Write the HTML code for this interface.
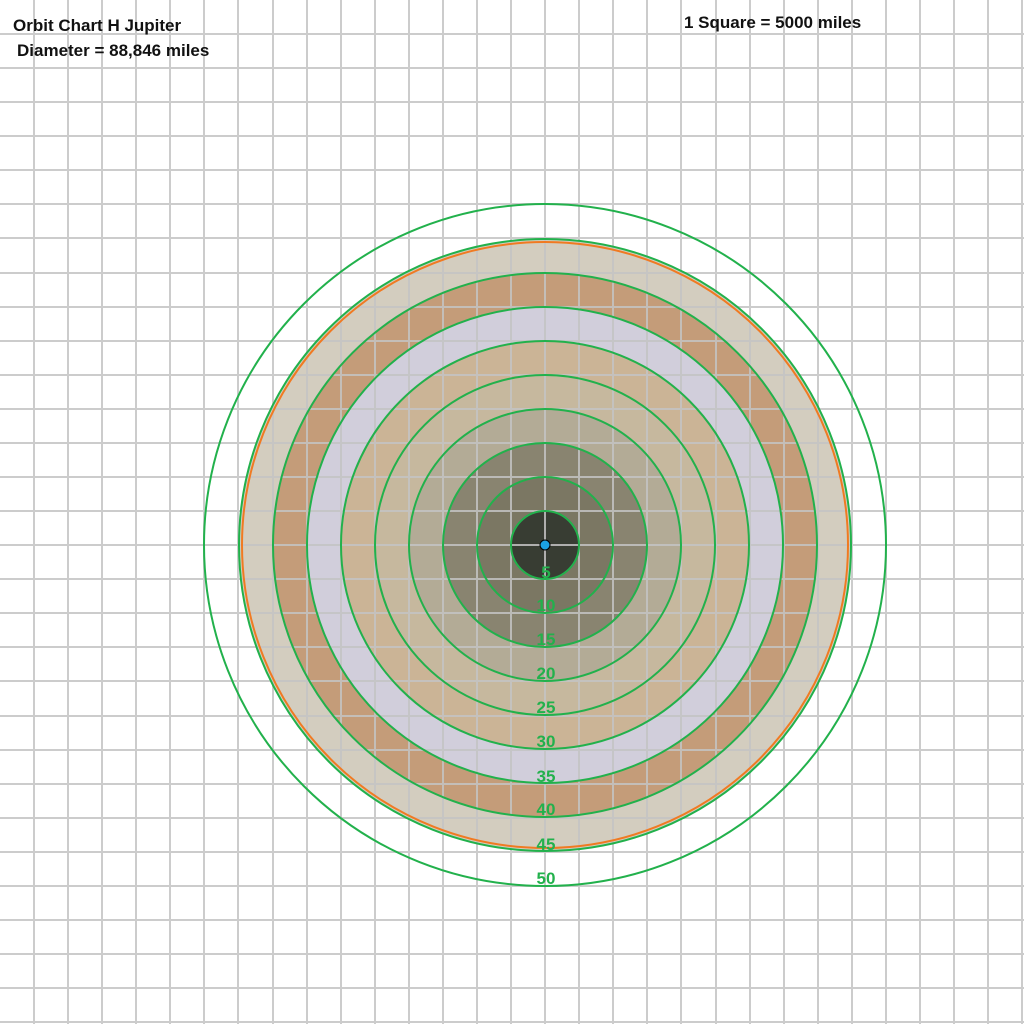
<!DOCTYPE html>
<html><head><style>html,body{margin:0;padding:0;background:#fff}svg{display:block}</style></head><body>
<svg width="1024" height="1024" viewBox="0 0 1024 1024" xmlns="http://www.w3.org/2000/svg">
<rect width="1024" height="1024" fill="#fff"/>
<g>
<circle cx="545" cy="545" r="306" fill="#d3cdbf"/>
<circle cx="545" cy="545" r="272" fill="#c49c79"/>
<circle cx="545" cy="545" r="238" fill="#d1cedb"/>
<circle cx="545" cy="545" r="204" fill="#cbb496"/>
<circle cx="545" cy="545" r="170" fill="#c6b89e"/>
<circle cx="545" cy="545" r="136" fill="#b3ab96"/>
<circle cx="545" cy="545" r="102" fill="#898470"/>
<circle cx="545" cy="545" r="68" fill="#7b7763"/>
<circle cx="545" cy="545" r="34" fill="#383d33"/>
</g>
<g stroke="#c4c4c4" stroke-width="2" opacity="0.85" id="grid">
<path d="M34 0V1024M68 0V1024M102 0V1024M136 0V1024M170 0V1024M204 0V1024M238 0V1024M273 0V1024M307 0V1024M341 0V1024M375 0V1024M409 0V1024M443 0V1024M477 0V1024M511 0V1024M545 0V1024M579 0V1024M613 0V1024M647 0V1024M681 0V1024M716 0V1024M750 0V1024M784 0V1024M818 0V1024M852 0V1024M886 0V1024M920 0V1024M954 0V1024M988 0V1024M1022 0V1024"/>
<path d="M0 34H1024M0 68H1024M0 102H1024M0 136H1024M0 170H1024M0 204H1024M0 238H1024M0 273H1024M0 307H1024M0 341H1024M0 375H1024M0 409H1024M0 443H1024M0 477H1024M0 511H1024M0 545H1024M0 579H1024M0 613H1024M0 647H1024M0 681H1024M0 716H1024M0 750H1024M0 784H1024M0 818H1024M0 852H1024M0 886H1024M0 920H1024M0 954H1024M0 988H1024M0 1022H1024"/>
</g>
<g fill="none" stroke="#22b14c" stroke-width="2">
<circle cx="545" cy="545" r="34"/>
<circle cx="545" cy="545" r="68"/>
<circle cx="545" cy="545" r="102"/>
<circle cx="545" cy="545" r="136"/>
<circle cx="545" cy="545" r="170"/>
<circle cx="545" cy="545" r="204"/>
<circle cx="545" cy="545" r="238"/>
<circle cx="545" cy="545" r="272"/>
<circle cx="545" cy="545" r="306"/>
<circle cx="545" cy="545" r="341"/>
</g>
<circle cx="545" cy="545" r="303" fill="none" stroke="#f07a22" stroke-width="2"/>
<circle cx="545" cy="545" r="5" fill="#1ba1e2" stroke="#000" stroke-width="1"/>
<g font-family="Liberation Sans, sans-serif" font-weight="bold" font-size="17" fill="#22b14c" text-anchor="middle">
<text x="546" y="578">5</text>
<text x="546" y="611">10</text>
<text x="546" y="645">15</text>
<text x="546" y="679">20</text>
<text x="546" y="713">25</text>
<text x="546" y="747">30</text>
<text x="546" y="782">35</text>
<text x="546" y="815">40</text>
<text x="546" y="850">45</text>
<text x="546" y="884">50</text>
</g>
<g font-family="Liberation Sans, sans-serif" font-weight="bold" font-size="17" fill="#111">
<text x="13" y="31">Orbit Chart H Jupiter</text>
<text x="17" y="56">Diameter = 88,846 miles</text>
<text x="684" y="28">1 Square = 5000 miles</text>
</g>
</svg>
</body></html>
